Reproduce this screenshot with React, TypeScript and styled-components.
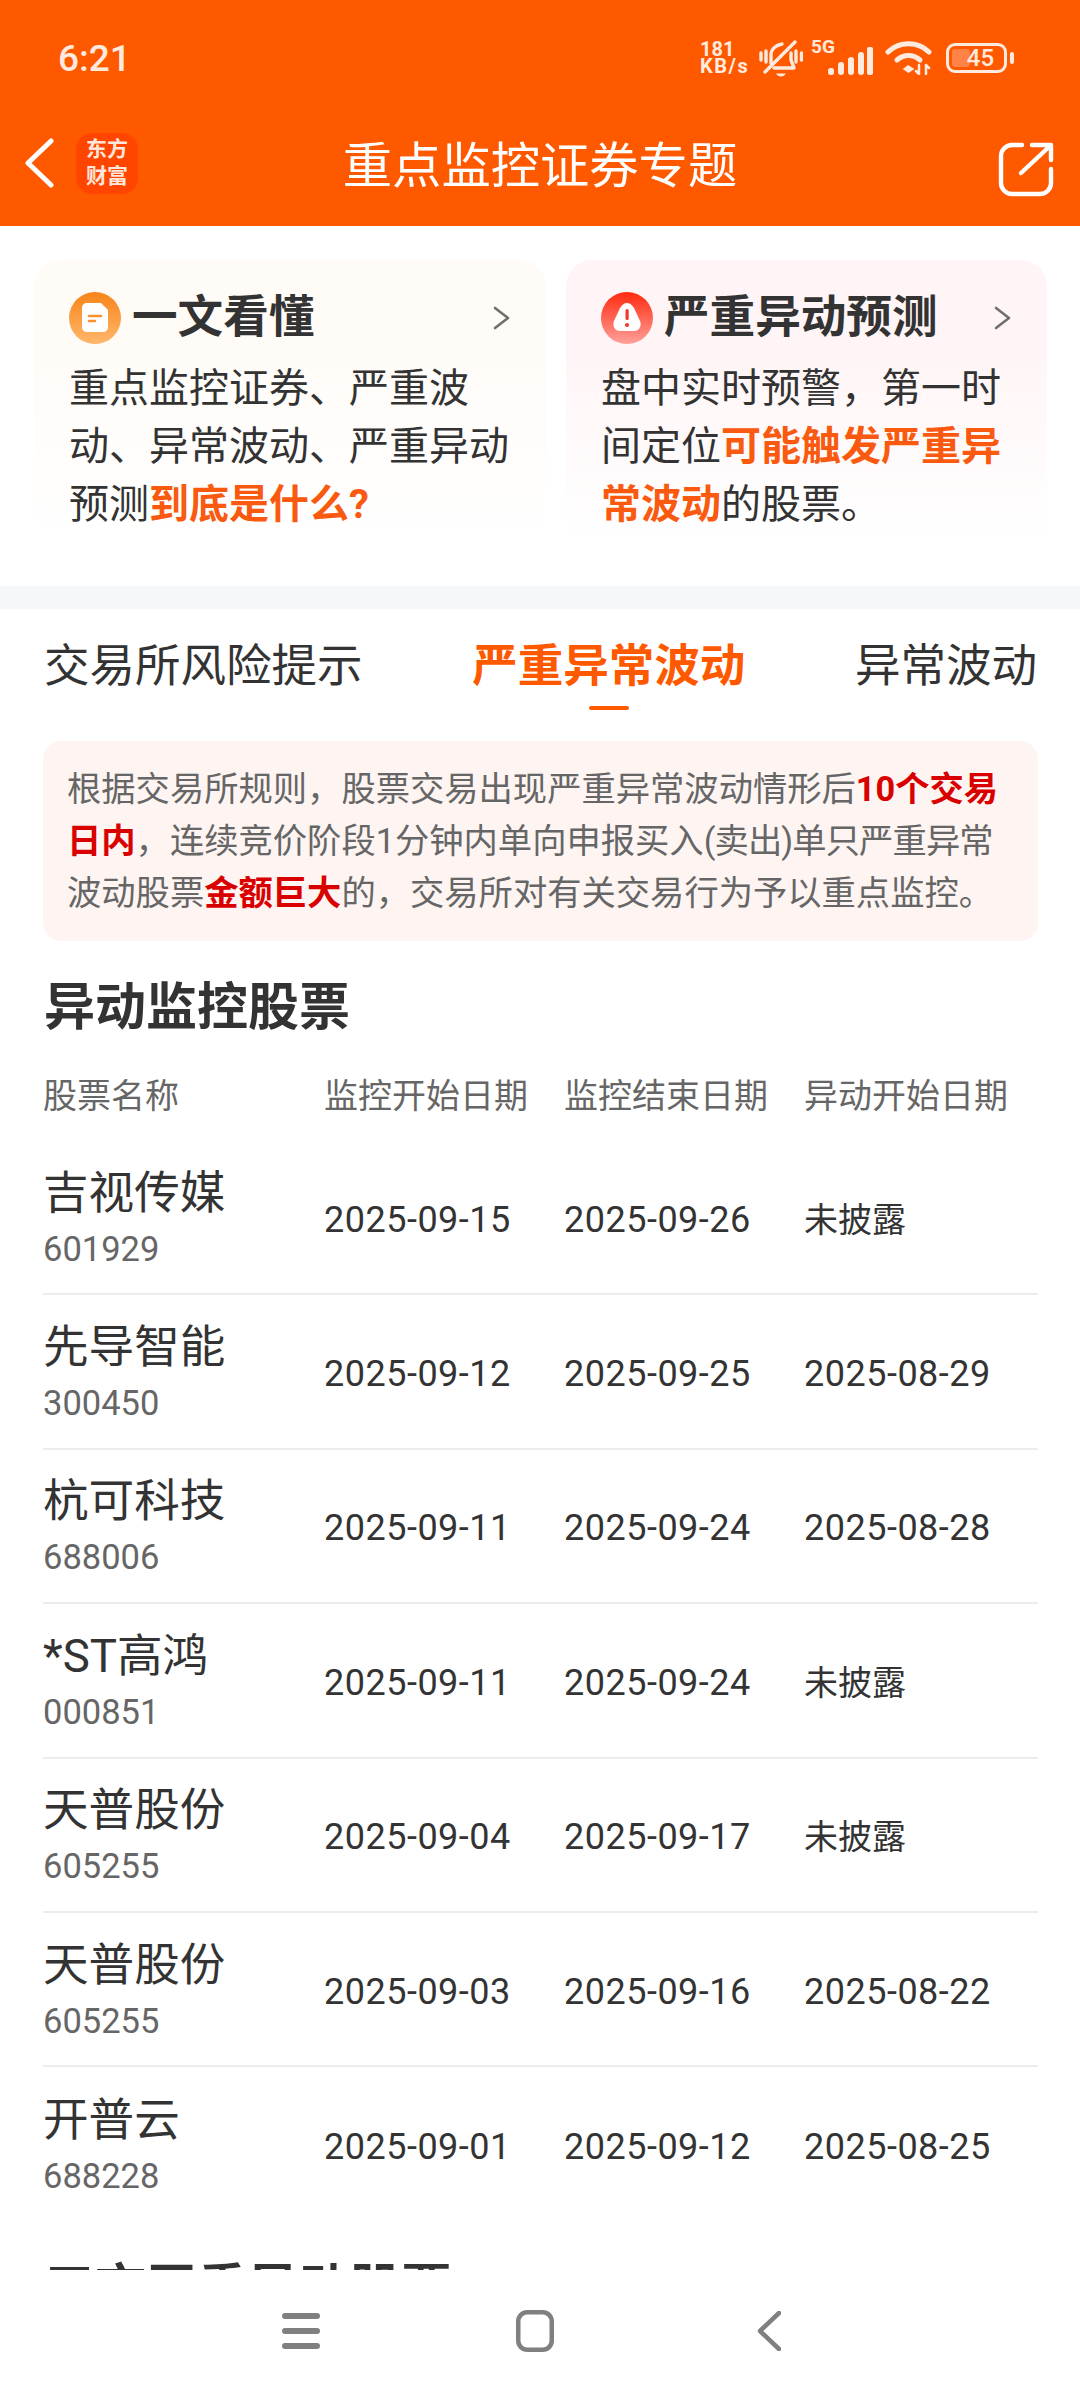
import React from "react";
import styled, { createGlobalStyle } from "styled-components";

const GlobalStyle = createGlobalStyle`
  html, body { margin: 0; padding: 0; background: #fff; }
  body { font-family: Roboto, "Noto Sans CJK SC", sans-serif; color: #333; }
  * { box-sizing: border-box; }
`;

const Page = styled.div`
  width: 1080px;
  height: 2400px;
  display: flex;
  flex-direction: column;
  overflow: hidden;
  background: #fff;
`;

const Header = styled.header`
  height: 226px;
  flex: none;
  background: #ff5900;
  color: #fff;
`;

const StatusBar = styled.div`
  height: 100px;
  padding: 16px 73px 0 58px;
  display: flex;
  align-items: center;
  justify-content: space-between;
  color: #ffeadf;
`;

const Clock = styled.span`
  font-size: 37px;
  font-weight: 500;
  line-height: 1;
`;

const StatusIcons = styled.div`
  display: flex;
  align-items: center;
`;

const Speed = styled.div`
  width: 48px;
  margin-right: 11px;
  font-size: 20px;
  font-weight: 700;
  line-height: 17px;
  white-space: nowrap;
`;

const SpeedUnit = styled.span`
  letter-spacing: 1.5px;
`;

const BellIcon = styled.svg`
  display: block;
  width: 44px;
  height: 37px;
  margin-right: 25px;
`;

const SignalGroup = styled.div`
  position: relative;
  width: 45px;
  height: 28px;
  margin: 6px 12px 0 0;
`;

const NetworkTag = styled.span`
  position: absolute;
  left: -17px;
  top: -10px;
  font-size: 19px;
  font-weight: 700;
  line-height: 1;
`;

const WifiIcon = styled.svg`
  display: block;
  width: 47px;
  height: 34px;
  margin-right: 14px;
`;

const Battery = styled.div`
  position: relative;
  width: 61px;
  height: 30px;
  border: 3px solid #ffeadf;
  border-radius: 9px;
  display: flex;
  align-items: center;
  justify-content: center;
  font-size: 24px;
  font-weight: 500;
  line-height: 1;

  &::before {
    content: "";
    position: absolute;
    left: 3px;
    top: 3px;
    bottom: 3px;
    width: 18px;
    border-radius: 3px;
    background: #ff8347;
  }

  &::after {
    content: "";
    position: absolute;
    right: -10px;
    top: 6px;
    width: 4px;
    height: 12px;
    border-radius: 2px;
    background: #ffeadf;
  }
`;

const BatteryLevel = styled.span`
  position: relative;
  left: 4px;
`;

const Toolbar = styled.div`
  height: 126px;
  display: grid;
  grid-template-columns: 1fr auto 1fr;
  align-items: center;
  padding: 0 26px 0 24px;
`;

const ToolbarStart = styled.div`
  display: flex;
  align-items: center;
  gap: 22px;
`;

const BackIcon = styled.svg`
  display: block;
  width: 30px;
  height: 50px;
`;

const Logo = styled.div`
  width: 62px;
  height: 61px;
  border-radius: 16px;
  background: #ff4500;
  color: #ffe6da;
  font-size: 21px;
  font-weight: 700;
  line-height: 27px;
  text-align: center;
  display: flex;
  align-items: center;
  justify-content: center;
`;

const PageTitle = styled.h1`
  margin: 0 0 0 2px;
  padding-top: 6px;
  font-size: 49.3px;
  font-weight: 400;
  line-height: 60px;
  white-space: nowrap;
`;

const ShareIcon = styled.svg`
  display: block;
  justify-self: end;
  width: 56px;
  height: 56px;
  margin-top: 11px;
`;

const Main = styled.main`
  flex: 1;
  min-height: 0;
  overflow: hidden;
`;

const Cards = styled.section`
  height: 360px;
  padding: 34px 0 0 34px;
  display: grid;
  grid-template-columns: 512px 481px;
  column-gap: 20px;
  align-items: start;
`;

const Card = styled.article<{ $tint: string }>`
  height: 280px;
  padding: 32px 36px 8px 35px;
  border-radius: 26px 26px 0 0;
  background: linear-gradient(180deg, ${(p) => p.$tint} 0%, ${(p) => p.$tint} 35%, #fff 100%);
`;

const CardHead = styled.div`
  height: 52px;
  display: flex;
  align-items: center;
`;

const CardBadge = styled.svg`
  display: block;
  flex: none;
  width: 52px;
  height: 52px;
  margin-right: 11px;
`;

const CardTitle = styled.h2`
  margin: 0;
  font-size: 45.6px;
  font-weight: 700;
  line-height: 52px;
  color: #333;
  white-space: nowrap;
`;

const CardChevron = styled.svg`
  display: block;
  flex: none;
  margin-left: auto;
  width: 17px;
  height: 24px;
`;

const CardBody = styled.p`
  margin: 16px 0 0;
  font-size: 40px;
  line-height: 58px;
  color: #333;
`;

const CardMark = styled.b`
  font-weight: 700;
  color: #f95a10;
`;

const Band = styled.div`
  height: 23px;
  background: #f6f7f9;
`;

const Tabs = styled.nav`
  padding: 30px 43px 0 44px;
  display: flex;
  justify-content: space-between;
`;

const Tab = styled.span<{ $active?: boolean }>`
  position: relative;
  font-size: 45.5px;
  line-height: 56px;
  font-weight: ${(p) => (p.$active ? 700 : 400)};
  color: ${(p) => (p.$active ? "#ff5900" : "#333")};
  white-space: nowrap;

  ${(p) =>
    p.$active &&
    `&::after {
      content: "";
      position: absolute;
      left: 50%;
      bottom: -15px;
      width: 40px;
      height: 4px;
      margin-left: -20px;
      border-radius: 2px;
      background: #ff5900;
    }`}
`;

const Notice = styled.p`
  width: 995px;
  margin: 46px 0 0 43px;
  padding: 22px 30px 22px 24px;
  border-radius: 18px;
  background: #fef5f2;
  font-size: 34.3px;
  line-height: 52px;
  color: #666;
`;

const NoticeMark = styled.b`
  font-weight: 700;
  color: #d90000;
`;

const NoticeTight = styled.span`
  letter-spacing: -0.9px;
`;

const SectionTitle = styled.h2`
  margin: 37px 0 0 44px;
  font-size: 51px;
  font-weight: 700;
  line-height: 60px;
  color: #333;
`;

const Table = styled.div`
  width: 995px;
  margin: 36px 0 0 43px;
`;

const columns = "281px 240px 240px 1fr";

const TableHead = styled.div`
  display: grid;
  grid-template-columns: ${columns};
  margin-bottom: 23px;
  font-size: 34px;
  line-height: 44px;
  color: #666;
`;

const Row = styled.div<{ $last?: boolean }>`
  height: 154.4px;
  display: grid;
  grid-template-columns: ${columns};
  align-items: center;
  border-bottom: ${(p) => (p.$last ? "none" : "2px solid #ececec")};
`;

const StockName = styled.div`
  padding-top: 3px;
  font-size: 45.6px;
  line-height: 52px;
  color: #333;
`;

const StockCode = styled.div`
  margin-top: 8px;
  font-size: 34.5px;
  line-height: 42px;
  color: #666;
`;

const DateCell = styled.div<{ $undisclosed?: boolean }>`
  margin-top: 5px;
  font-size: ${(p) => (p.$undisclosed ? "34px" : "36px")};
  line-height: 44px;
  letter-spacing: ${(p) => (p.$undisclosed ? "0" : "0.5px")};
  color: #333;
`;

const NavBar = styled.footer`
  height: 130px;
  flex: none;
  padding: 0 0 8px 184px;
  display: flex;
  align-items: center;
  background: #fff;
`;

const NavSlot = styled.div`
  width: 234px;
  display: flex;
  justify-content: center;
`;

const stocks = [
  { name: "吉视传媒", code: "601929", start: "2025-09-15", end: "2025-09-26", first: "未披露" },
  { name: "先导智能", code: "300450", start: "2025-09-12", end: "2025-09-25", first: "2025-08-29" },
  { name: "杭可科技", code: "688006", start: "2025-09-11", end: "2025-09-24", first: "2025-08-28" },
  { name: "*ST高鸿", code: "000851", start: "2025-09-11", end: "2025-09-24", first: "未披露" },
  { name: "天普股份", code: "605255", start: "2025-09-04", end: "2025-09-17", first: "未披露" },
  { name: "天普股份", code: "605255", start: "2025-09-03", end: "2025-09-16", first: "2025-08-22" },
  { name: "开普云", code: "688228", start: "2025-09-01", end: "2025-09-12", first: "2025-08-25" },
];

const Chevron = () => (
  <CardChevron viewBox="0 0 17 24" fill="none" stroke="#6f6f6f" strokeWidth="2.6" strokeLinecap="round" strokeLinejoin="round">
    <path d="M2 2l13 10-13 10" />
  </CardChevron>
);

export default function App() {
  return (
    <Page>
      <GlobalStyle />
      <Header>
        <StatusBar>
          <Clock>6:21</Clock>
          <StatusIcons>
            <Speed>
              181
              <br />
              <SpeedUnit>KB/s</SpeedUnit>
            </Speed>
            <BellIcon viewBox="0 0 44 37" fill="none" stroke="#ffeadf" strokeWidth="3.4" strokeLinecap="round" strokeLinejoin="round">
              <path d="M2 13v7M7 11v11M37 11v11M42.5 13v7" />
              <path d="M6 32L36 2" />
              <path d="M12 23v-8c0-6 5-10 11-11" />
              <path d="M32 13v7l3 8H15" />
              <path d="M17 33.500h10c-1 2-3 3-5 3s-4-1-5-3z" fill="#ffeadf" stroke="none" />
            </BellIcon>
            <SignalGroup>
              <NetworkTag>5G</NetworkTag>
              <svg width="45" height="28" viewBox="0 0 45 28" fill="#ffeadf">
                <rect x="0" y="21" width="6" height="7" rx="2.500" />
                <rect x="10" y="15" width="6" height="13" rx="3" />
                <rect x="20" y="10" width="6" height="18" rx="3" />
                <rect x="30" y="5" width="6" height="23" rx="3" />
                <rect x="39" y="0" width="6" height="28" rx="2" />
              </svg>
            </SignalGroup>
            <WifiIcon viewBox="0 0 47 34" fill="none" stroke="#ffeadf" strokeLinecap="round">
              <path d="M3 11C14 0 33 0 44 11" strokeWidth="5" />
              <path d="M12 19c7-6 16-6 23 0" strokeWidth="5" />
              <path d="M19 28l4-3 5 3-4.500 3z" fill="#ffeadf" strokeWidth="1.500" />
              <path d="M34 24v9M31 30l3 3M41 33v-9M44 27l-3-3" strokeWidth="2.500" />
            </WifiIcon>
            <Battery>
              <BatteryLevel>45</BatteryLevel>
            </Battery>
          </StatusIcons>
        </StatusBar>
        <Toolbar>
          <ToolbarStart>
            <BackIcon viewBox="0 0 30 50" fill="none" stroke="#fff" strokeWidth="5" strokeLinecap="round" strokeLinejoin="round">
              <path d="M27 3L4 25l23 22" />
            </BackIcon>
            <Logo>
              东方
              <br />
              财富
            </Logo>
          </ToolbarStart>
          <PageTitle>重点监控证券专题</PageTitle>
          <ShareIcon viewBox="0 0 56 56" fill="none" stroke="#fff" strokeWidth="4.4" strokeLinecap="round" strokeLinejoin="round">
            <path d="M24 4H14C8 4 3 9 3 15v27c0 6 5 11 11 11h28c6 0 11-5 11-11V28" />
            <path d="M23 32L52 5M34 4h19v15" />
          </ShareIcon>
        </Toolbar>
      </Header>

      <Main>
        <Cards>
          <Card $tint="#fffcf8">
            <CardHead>
              <CardBadge viewBox="0 0 52 52">
                <defs>
                  <linearGradient id="docFill" x1="0" y1="0" x2="0" y2="1">
                    <stop offset="0" stopColor="#f8841a" />
                    <stop offset="1" stopColor="#ffb76b" />
                  </linearGradient>
                </defs>
                <circle cx="26" cy="26" r="26" fill="url(#docFill)" />
                <path d="M18 11h14l7 7v17c0 3-2 5-5 5H18c-3 0-5-2-5-5V16c0-3 2-5 5-5z" fill="#fff" />
                <path d="M20 24h12M20 29h6" stroke="#f8922e" strokeWidth="2.600" strokeLinecap="round" />
              </CardBadge>
              <CardTitle>一文看懂</CardTitle>
              <Chevron />
            </CardHead>
            <CardBody>
              重点监控证券、严重波动、异常波动、严重异动预测<CardMark>到底是什么?</CardMark>
            </CardBody>
          </Card>
          <Card $tint="#fff5f6">
            <CardHead>
              <CardBadge viewBox="0 0 52 52">
                <defs>
                  <linearGradient id="alertFill" x1="0" y1="0" x2="0" y2="1">
                    <stop offset="0" stopColor="#ff2a0e" />
                    <stop offset="1" stopColor="#ffa09a" />
                  </linearGradient>
                </defs>
                <circle cx="26" cy="26" r="26" fill="url(#alertFill)" />
                <path d="M26 11c3 0 5 2 7 5l6 13c2 5-1 10-6 10H19c-5 0-8-5-6-10l6-13c2-3 4-5 7-5z" fill="#fff" />
                <rect x="24.500" y="17" width="3.200" height="11" rx="1.600" fill="#f0392b" />
                <circle cx="26" cy="33" r="2.100" fill="#f0392b" />
              </CardBadge>
              <CardTitle>严重异动预测</CardTitle>
              <Chevron />
            </CardHead>
            <CardBody>
              盘中实时预警，第一时间定位<CardMark>可能触发严重异常波动</CardMark>的股票。
            </CardBody>
          </Card>
        </Cards>
        <Band />
        <Tabs>
          <Tab>交易所风险提示</Tab>
          <Tab $active>严重异常波动</Tab>
          <Tab>异常波动</Tab>
        </Tabs>
        <Notice>
          根据交易所规则，股票交易出现严重异常波动情形后<NoticeMark>10个交易日内</NoticeMark>，连续竞价阶段1分钟内单向申报买入<NoticeTight>(卖出)单只严重异常</NoticeTight>波动股票<NoticeMark>金额巨大</NoticeMark>的，交易所对有关交易行为予以重点监控。
        </Notice>
        <SectionTitle>异动监控股票</SectionTitle>
        <Table>
          <TableHead>
            <span>股票名称</span>
            <span>监控开始日期</span>
            <span>监控结束日期</span>
            <span>异动开始日期</span>
          </TableHead>
          {stocks.map((s, i) => (
            <Row key={s.code + s.start} $last={i === stocks.length - 1}>
              <div>
                <StockName>{s.name}</StockName>
                <StockCode>{s.code}</StockCode>
              </div>
              <DateCell>{s.start}</DateCell>
              <DateCell>{s.end}</DateCell>
              <DateCell $undisclosed={s.first === "未披露"}>{s.first}</DateCell>
            </Row>
          ))}
        </Table>
        <SectionTitle>三市严重异动股票</SectionTitle>
      </Main>

      <NavBar>
        <NavSlot>
          <svg width="38" height="36" viewBox="0 0 38 36" fill="#808080">
            <rect x="0" y="0" width="38" height="6" rx="3" />
            <rect x="0" y="15" width="38" height="6" rx="3" />
            <rect x="0" y="30" width="38" height="6" rx="3" />
          </svg>
        </NavSlot>
        <NavSlot>
          <svg width="38" height="42" viewBox="0 0 38 42" fill="none" stroke="#808080" strokeWidth="4.500">
            <rect x="2.250" y="2.250" width="33.500" height="37.500" rx="9" />
          </svg>
        </NavSlot>
        <NavSlot>
          <svg width="24" height="40" viewBox="0 0 24 40" fill="none" stroke="#808080" strokeWidth="4.500" strokeLinecap="round" strokeLinejoin="round">
            <path d="M22 2L3 20l19 18" />
          </svg>
        </NavSlot>
      </NavBar>
    </Page>
  );
}
